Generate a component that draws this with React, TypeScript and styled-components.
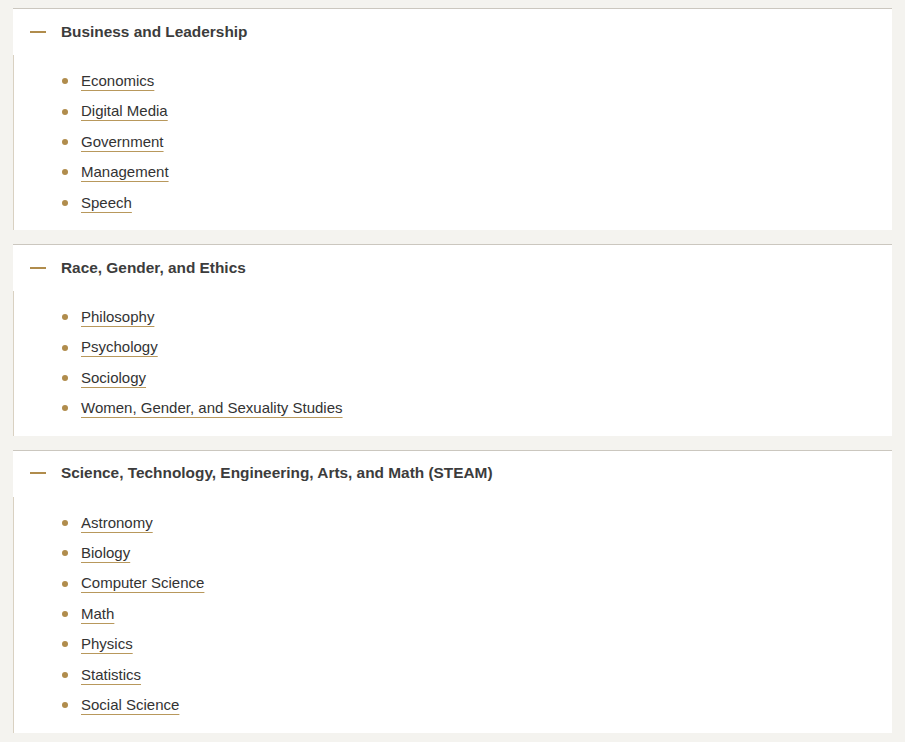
import styled, { createGlobalStyle } from "styled-components";

const GlobalStyle = createGlobalStyle`
  body {
    margin: 0;
    background: #f4f3ef;
    font-family: "Liberation Sans", Arial, sans-serif;
  }
`;

const Page = styled.div`
  padding: 8px 13px 0;
`;

const Section = styled.section`
  background: #ffffff;
  border-top: 1px solid #cbc7bf;
  margin-bottom: 14px;
`;

const Header = styled.div`
  height: 46px;
  display: flex;
  align-items: center;
  padding: 0 0 1px 17px;
  box-sizing: border-box;
  gap: 15px;
`;

const Dash = styled.span`
  width: 16px;
  height: 2px;
  background: #b08c4c;
`;

const Title = styled.h3`
  margin: 0;
  font-size: 15.4px;
  font-weight: 700;
  color: #3c3c3c;
`;

const Panel = styled.ul`
  margin: 0;
  list-style: none;
  border-left: 1px solid #d9d1c2;
  padding: 11px 0 12px 48px;
`;

const Item = styled.li`
  display: flex;
  align-items: center;
  line-height: 30.4px;
  font-size: 15px;
`;

const Bullet = styled.span`
  width: 6px;
  height: 6px;
  border-radius: 50%;
  background: #b08c4c;
  margin-right: 13px;
`;

const Link = styled.a`
  color: #333333;
  text-decoration: underline;
  text-decoration-color: #b8985c;
  text-decoration-thickness: 1px;
  text-underline-offset: 4px;
  cursor: pointer;
`;

const groups = [
  {
    title: "Business and Leadership",
    items: ["Economics", "Digital Media", "Government", "Management", "Speech"],
  },
  {
    title: "Race, Gender, and Ethics",
    items: [
      "Philosophy",
      "Psychology",
      "Sociology",
      "Women, Gender, and Sexuality Studies",
    ],
  },
  {
    title: "Science, Technology, Engineering, Arts, and Math (STEAM)",
    items: [
      "Astronomy",
      "Biology",
      "Computer Science",
      "Math",
      "Physics",
      "Statistics",
      "Social Science",
    ],
  },
];

function App() {
  return (
    <Page>
      <GlobalStyle />
      {groups.map((g) => (
        <Section key={g.title}>
          <Header>
            <Dash />
            <Title>{g.title}</Title>
          </Header>
          <Panel>
            {g.items.map((it) => (
              <Item key={it}>
                <Bullet />
                <Link>{it}</Link>
              </Item>
            ))}
          </Panel>
        </Section>
      ))}
    </Page>
  );
}

export default App;
